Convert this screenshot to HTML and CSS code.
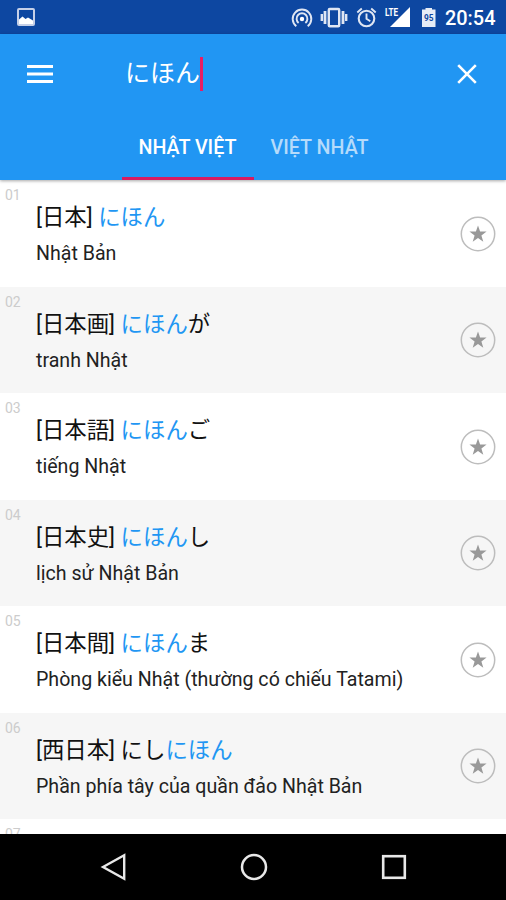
FILE: index.html
```
<!DOCTYPE html>
<html lang="vi">

<head>
    <meta charset="UTF-8">
    <title>Từ điển Nhật Việt</title>
    <link rel="stylesheet" href="styles.css">
</head>

<body>
    <!-- star used by every row -->
    <svg class="defs" width="0" height="0">
        <symbol id="star" viewBox="0 0 36 36">
            <circle cx="18" cy="18" r="16.7" stroke="#bdbdbd" stroke-width="1.5" />
            <path d="M18 9.4l2.1 6.1 6.5.1-5.2 3.9 1.9 6.2-5.3-3.7-5.3 3.7 1.9-6.2-5.2-3.9 6.5-.1z" fill="#999" />
        </symbol>
    </svg>

    <div class="status">
        <svg class="picture" width="18" height="18" viewBox="0 0 18 18">
            <rect x="1" y="1" width="16" height="16" rx="1" fill="none" stroke="#c5d0e8" stroke-width="2" />
            <path d="M2 16v-4.5l3.5-3 3 2.5 2.5-1.5 5 3V16z" fill="#fff" />
        </svg>
        <svg width="220" height="34" viewBox="0 0 220 34">
            <g fill="none" stroke="#dfe6f3" stroke-width="1.9">
                <path d="M16.3 26.2a9.3 9.3 0 1 1 11.4 0M18.6 22.9a5.4 5.4 0 1 1 6.8 0" />
                <rect x="48.8" y="9" width="10.4" height="17.2" rx="1" stroke-width="2.4" />
                <path d="M45 11v13M63 11v13" stroke-width="2.8" />
                <path d="M41.8 14v7M66.2 14v7" stroke-width="2.4" />
                <circle cx="86.5" cy="18.5" r="7.8" stroke-width="2.1" />
                <path d="M86.5 13.5v5.3l3.8 2.4M77.3 12.5l4.5-4M95.7 12.5l-4.5-4" />
            </g>
            <circle cx="22" cy="19" r="2.2" fill="#fff" />
            <path d="M110 27h20V7z" fill="#fff" />
            <text class="lte" x="105" y="16" textLength="13" lengthAdjust="spacingAndGlyphs">LTE</text>
            <path d="M142 9.5h3.5V8h6.5v1.5h3.5V27H142z" fill="#e6ecf6" />
            <text class="level" x="144" y="21" textLength="9.5" lengthAdjust="spacingAndGlyphs">95</text>
            <text class="time" x="165" y="25" textLength="50.5" lengthAdjust="spacingAndGlyphs">20:54</text>
        </svg>
    </div>

    <div class="header">
        <div class="search">
            <svg width="28" height="22" viewBox="0 0 28 22">
                <path d="M1 3.5h26M1 11h26M1 18.5h26" stroke="#fff" stroke-width="3" />
            </svg>
            <div class="query">にほん<span class="cursor"></span></div>
            <svg class="close" width="20" height="20" viewBox="0 0 20 20">
                <path d="M1.2 1.2l17.6 17.6M18.8 1.2L1.2 18.8" stroke="#fff" stroke-width="2.6" />
            </svg>
        </div>
        <div class="tabs">
            <span class="tab active">NHẬT VIỆT</span>
            <span class="tab">VIỆT NHẬT</span>
        </div>
    </div>

    <ul class="list">
        <li>
            <span class="num">01</span>
            <div class="entry">
                <p class="word">[日本] <b>にほん</b></p>
                <p class="mean">Nhật Bản</p>
            </div>
            <svg class="star"><use href="#star" /></svg>
        </li>
        <li>
            <span class="num">02</span>
            <div class="entry">
                <p class="word">[日本画] <b>にほん</b>が</p>
                <p class="mean">tranh Nhật</p>
            </div>
            <svg class="star"><use href="#star" /></svg>
        </li>
        <li>
            <span class="num">03</span>
            <div class="entry">
                <p class="word">[日本語] <b>にほん</b>ご</p>
                <p class="mean">tiếng Nhật</p>
            </div>
            <svg class="star"><use href="#star" /></svg>
        </li>
        <li>
            <span class="num">04</span>
            <div class="entry">
                <p class="word">[日本史] <b>にほん</b>し</p>
                <p class="mean">lịch sử Nhật Bản</p>
            </div>
            <svg class="star"><use href="#star" /></svg>
        </li>
        <li>
            <span class="num">05</span>
            <div class="entry">
                <p class="word">[日本間] <b>にほん</b>ま</p>
                <p class="mean">Phòng kiểu Nhật (thường có chiếu Tatami)</p>
            </div>
            <svg class="star"><use href="#star" /></svg>
        </li>
        <li>
            <span class="num">06</span>
            <div class="entry">
                <p class="word">[西日本] にし<b>にほん</b></p>
                <p class="mean">Phần phía tây của quần đảo Nhật Bản</p>
            </div>
            <svg class="star"><use href="#star" /></svg>
        </li>
        <li>
            <span class="num">07</span>
        </li>
    </ul>

    <div class="nav">
        <svg width="28" height="30" viewBox="0 0 28 30">
            <path d="M3 15L24.2 3.2v23.6z" fill="none" stroke="#e8e8e8" stroke-width="2.4" />
        </svg>
        <svg width="28" height="30" viewBox="0 0 28 30">
            <circle cx="14" cy="15" r="12" fill="none" stroke="#e8e8e8" stroke-width="2.5" />
        </svg>
        <svg width="28" height="30" viewBox="0 0 28 30">
            <rect x="3.2" y="4.2" width="21.6" height="21.6" fill="none" stroke="#e8e8e8" stroke-width="2.6" />
        </svg>
    </div>
</body>

</html>
```

FILE: styles.css
```
* {
    padding: 0;
    margin: 0;
    list-style: none;
    box-sizing: border-box;
}

body {
    display: flex;
    flex-direction: column;
    height: 900px;
    overflow: hidden;
    font-family: Roboto, "Noto Sans CJK JP", sans-serif;
    background: #fff;
}

svg {
    display: block;
    flex: none;
}

.defs {
    position: absolute;
}

.status {
    display: flex;
    justify-content: space-between;
    flex: none;
    height: 34px;
    padding: 0 6px 0 17px;
    background: #0d47a1;
}

.picture {
    margin-top: 8px;
}

.status text {
    font-weight: 500;
    fill: #fff;
}

.status .lte {
    font-size: 11px;
    font-weight: bold;
}

.status .level {
    font-size: 9px;
    font-weight: bold;
    fill: #0d47a1;
}

.status .time {
    font-size: 20px;
}

.header {
    flex: none;
    height: 146px;
    background: #2196f3;
    box-shadow: 0 1px 3px rgba(0, 0, 0, .35);
    z-index: 1;
}

.search {
    display: flex;
    align-items: center;
    height: 79px;
    padding: 0 29px 0 26px;
}

.query {
    display: flex;
    align-items: center;
    margin-left: 71px;
    line-height: 38px;
    font-size: 25px;
    color: #fff;
}

.cursor {
    width: 3px;
    height: 34px;
    background: #e91e63;
}

.close {
    margin-left: auto;
}

.tabs {
    display: flex;
    justify-content: center;
    height: 67px;
    padding-left: 1px;
}

.tab {
    width: 132px;
    line-height: 70px;
    text-align: center;
    font-size: 19.7px;
    font-weight: 500;
    color: #b5dbfb;
}

.tab.active {
    color: #fff;
    border-bottom: 3px solid #d81b60;
}

.list {
    flex: 1;
    overflow: hidden;
}

li {
    display: flex;
    height: 106.5px;
    padding-right: 10px;
}

li:nth-child(even) {
    background: #f6f6f6;
}

.num {
    width: 36px;
    padding: 7px 0 0 5px;
    line-height: 16px;
    font-size: 14px;
    color: #ccc;
}

.entry {
    flex: 1;
    padding-top: 20px;
    white-space: nowrap;
}

.word {
    line-height: 35px;
    font-size: 22.4px;
    color: #111;
}

.word b {
    font-weight: normal;
    color: #2196f3;
}

.mean {
    margin-top: 5px;
    line-height: 27px;
    font-size: 19.6px;
    color: #222;
}

.star {
    align-self: center;
    width: 36px;
    height: 36px;
    margin-top: 1px;
    fill: none;
}

.nav {
    display: flex;
    align-items: center;
    justify-content: center;
    flex: none;
    gap: 112px;
    height: 66px;
    padding-left: 1px;
    background: #000;
}
```
